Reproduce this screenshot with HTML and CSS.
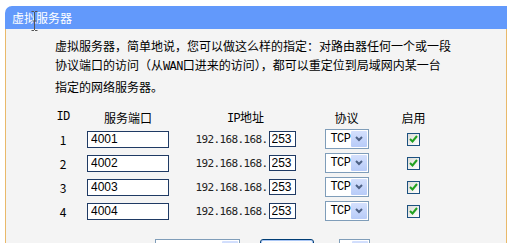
FILE: index.html
```html
<!DOCTYPE html>
<html lang="zh-CN">
<head>
<meta charset="UTF-8" />
<title>虚拟服务器</title>
<link rel="stylesheet" href="styles.css">
</head>
<body>

  <div class="box">
    <div class="box-title">虚拟服务器</div>
    <div class="box-body">
      <p class="intro">
        虚拟服务器，简单地说，您可以做这么样的指定：对路由器任何一个或一段<br>
        协议端口的访问（从<span class="lat">WAN</span>口进来的访问），都可以重定位到局域网内某一台<br>
        指定的网络服务器。
      </p>

      <div class="vs-table" id="vsTable">
        <div class="th"><span class="lat">ID</span></div>
        <div class="th">服务端口</div>
        <div class="th"><span><span class="lat">IP</span>地址</span></div>
        <div class="th">协议</div>
        <div class="th">启用</div>
      </div>

      <div class="quick">
        <span class="quick-label">常用服务端口：</span>
        <div class="dd dd-wide"><span class="dd-text">DNS(53)</span><span class="dd-btn"></span></div>
        <button class="btn">填充到</button>
        <div class="dd dd-small"><span class="dd-text">1</span><span class="dd-btn"></span></div>
      </div>
    </div>
  </div>

  <!-- mouse cursor over the title -->
  <svg class="cursor" width="7" height="20" viewBox="0 0 7 20">
    <path d="M0.5 0.5h2.5M4 0.5h2.5M3.5 1v18M0.5 19.5h2.5M4 19.5h2.5M1.5 10h4" stroke="#555" stroke-width="1" fill="none"/>
  </svg>

<script>
  const rules = [
    { id: 1, port: "4001", ip: "253", proto: "TCP", on: true },
    { id: 2, port: "4002", ip: "253", proto: "TCP", on: true },
    { id: 3, port: "4003", ip: "253", proto: "TCP", on: true },
    { id: 4, port: "4004", ip: "253", proto: "TCP", on: true }
  ];

  const check = '<svg width="9" height="8" viewBox="0 0 9 8"><path d="M1 4l2.5 2.5L8 1" stroke="#21a121" stroke-width="2" fill="none"/></svg>';
  const arrow = '<svg width="8" height="6" viewBox="0 0 8 6"><path d="M1 1l3 3 3-3" stroke="#4d6185" stroke-width="2" fill="none"/></svg>';

  const table = document.getElementById("vsTable");
  rules.forEach(r => {
    table.insertAdjacentHTML("beforeend", `
      <div class="td">${r.id}</div>
      <div class="td"><input class="port" type="text" value="${r.port}"></div>
      <div class="td"><span class="ip">192.168.168.</span><input class="ip-last" type="text" value="${r.ip}"></div>
      <div class="td"><div class="dd"><span class="dd-text lat">${r.proto}</span><span class="dd-btn">${arrow}</span></div></div>
      <div class="td"><span class="chk">${r.on ? check : ""}</span></div>
    `);
  });

  document.querySelectorAll(".quick .dd-btn").forEach(b => b.innerHTML = arrow);
</script>

</body>
</html>
```

FILE: styles.css
```css
/* Reset + basic */
* {
  box-sizing: border-box;
}
html {
  overflow: hidden;
}
body {
  margin: 0;
  background: #fff;
  color: #000;
  font-family: "Noto Sans CJK SC", "Noto Sans", sans-serif;
  font-size: 12px;
}
.lat {
  font-family: "Liberation Mono", monospace;
  letter-spacing: -0.6px;
}

/* Box */
.box {
  margin: 6px 0 0 5px;
  width: 502px;
}
.box-title {
  height: 23px;
  line-height: 23px;
  padding-left: 7px;
  background: #6299fb;
  color: #fff;
  border-radius: 7px 0 0 0;
}
.box-body {
  background: #f4f4f4;
  border-left: 1px solid #e9b96a;
  border-right: 1px solid #e9b96a;
  padding: 7px 0 20px 42px;
  height: 300px;
}
.intro {
  margin: 0;
  padding-left: 7px;
  line-height: 19px;
}

/* Table */
.vs-table {
  display: grid;
  grid-template-columns: 30px 100px 135px 67px 67px;
  grid-template-rows: 19px repeat(4, 24px);
  margin-top: 12px;
}
.th,
.td {
  display: flex;
  align-items: center;
  justify-content: center;
}
.th {
  line-height: 19px;
}
.port {
  width: 82px;
  height: 17px;
  margin: 0;
  padding: 0 0 0 3px;
  border: 1px solid #1f3a64;
  background: #fff;
  font: 12px "Liberation Sans", Arial, sans-serif;
}
.ip {
  font-family: "DejaVu Sans Mono", monospace;
  font-size: 11px;
  letter-spacing: -0.62px;
  color: #222;
  margin-right: 1px;
}
.ip-last {
  width: 27px;
  height: 16px;
  margin: 0;
  padding: 0 0 0 2px;
  border: 1px solid #1f3a64;
  background: #fff;
  font: 12px "Liberation Sans", Arial, sans-serif;
}

/* Drop downs */
.dd {
  display: flex;
  align-items: stretch;
  width: 44px;
  height: 20px;
  border: 1px solid #7f9db9;
  background: #fff;
  padding: 1px;
}
.dd-text {
  flex: 1;
  padding-left: 4px;
  line-height: 16px;
}
.dd-btn {
  width: 16px;
  display: flex;
  align-items: center;
  justify-content: center;
  background: linear-gradient(#d4e0fd, #b7cbf8);
  border-radius: 1px;
}
.chk {
  width: 13px;
  height: 13px;
  border: 1px solid #1c5180;
  background: linear-gradient(135deg, #dcdcd7, #fff);
  display: flex;
  align-items: center;
  justify-content: center;
}

/* Quick fill row */
.quick {
  display: flex;
  align-items: flex-start;
  margin-top: 16px;
  padding-left: 10px;
}
.quick-label {
  line-height: 20px;
  margin-top: 1px;
}
.dd-wide {
  width: 85px;
  margin-left: 13px;
}
.dd-small {
  width: 31px;
  margin-left: 25px;
}
.dd-wide .dd-text,
.dd-small .dd-text {
  font-family: "Liberation Sans", Arial, sans-serif;
}
.btn {
  width: 54px;
  height: 20px;
  margin: 0 0 0 20px;
  padding: 0;
  border: 1px solid #003c74;
  border-radius: 3px;
  background: linear-gradient(#fff, #e3e3dc);
  box-shadow: inset 0 0 0 1px #a9c6f5;
  font: 12px "Noto Sans CJK SC", sans-serif;
}

/* Cursor */
.cursor {
  position: absolute;
  left: 31px;
  top: 11px;
}
```
